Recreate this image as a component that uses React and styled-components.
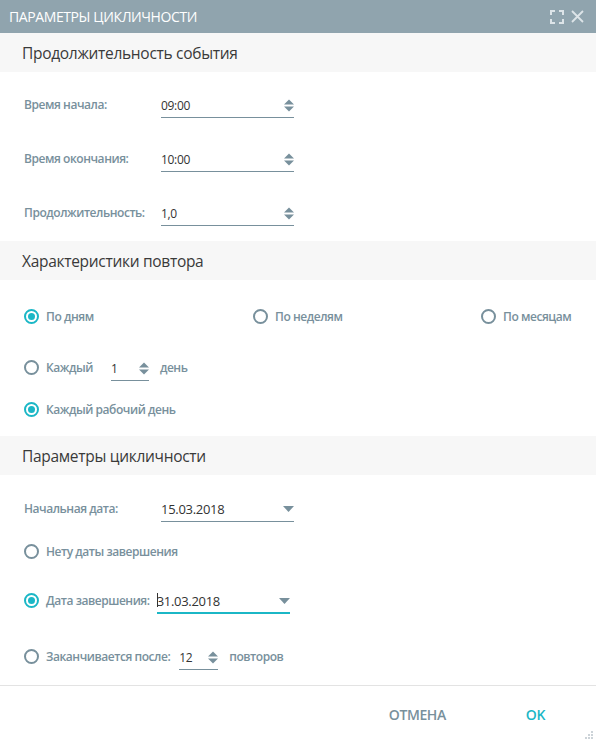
import React from 'react';
import styled, { createGlobalStyle } from 'styled-components';

const GlobalStyle = createGlobalStyle`
  html, body {
    margin: 0;
    padding: 0;
    background: #fff;
  }
  * { box-sizing: border-box; }
`;

const TEAL = '#1bb7c6';
const GRAY = '#78909c';

const Dialog = styled.div`
  width: 596px;
  height: 742px;
  background: #fff;
  display: flex;
  flex-direction: column;
  font-family: "Open Sans", "Noto Sans", sans-serif;
  position: relative;
  overflow: hidden;
`;

const Header = styled.div`
  height: 33px;
  background: #90a4ae;
  display: flex;
  align-items: center;
  justify-content: space-between;
  padding: 0 12px 0 9px;
  color: #fff;
`;

const Title = styled.div`
  font-size: 14px;
  letter-spacing: -0.4px;
  text-transform: uppercase;
`;

const HeaderTools = styled.div`
  display: flex;
  align-items: center;
  gap: 7px;
`;

const Band = styled.div`
  height: 39px;
  background: #f7f7f7;
  display: flex;
  align-items: center;
  padding-left: 22px;
  font-size: 15.5px;
  color: #3a3a3a;
  letter-spacing: -0.3px;
`;

const Body = styled.div`
  padding: ${({ pad }) => pad};
  display: flex;
  flex-direction: column;
`;

const Row = styled.div`
  height: ${({ h }) => h}px;
  display: flex;
  align-items: center;
  padding-left: 24px;
  padding-right: 24px;
`;

const RadioGrid = styled.div`
  height: ${({ h }) => h}px;
  display: grid;
  grid-template-columns: 229px 228px auto;
  align-items: center;
  padding-left: 24px;
`;

const Label = styled.span`
  width: ${({ w }) => (w ? `${w}px` : 'auto')};
  font-size: 12px;
  font-weight: 600;
  color: ${GRAY};
  letter-spacing: -0.45px;
  white-space: nowrap;
  margin-left: ${({ ml }) => ml || 0}px;
`;

const Field = styled.div`
  width: ${({ w }) => w}px;
  height: 24px;
  display: flex;
  align-items: center;
  justify-content: space-between;
  border-bottom: ${({ focused }) => (focused ? `2px solid ${TEAL}` : `1px solid ${GRAY}`)};
  margin-top: 4px;
  margin-left: ${({ ml }) => ml || 0}px;
  padding-bottom: ${({ focused }) => (focused ? 0 : 1)}px;
`;

const Value = styled.span`
  font-size: ${({ big }) => (big ? 13 : 12)}px;
  color: #333;
  letter-spacing: -0.3px;
  position: relative;
`;

const Caret = styled.span`
  position: absolute;
  left: 0;
  top: 1px;
  width: 1px;
  height: 14px;
  background: #333;
`;

const RadioWrap = styled.label`
  display: flex;
  align-items: center;
  gap: 7px;
`;

const Circle = styled.span`
  width: 15px;
  height: 15px;
  border-radius: 50%;
  border: 2px solid ${({ on }) => (on ? TEAL : GRAY)};
  display: flex;
  align-items: center;
  justify-content: center;
  flex-shrink: 0;
  &::after {
    content: '';
    width: 7px;
    height: 7px;
    border-radius: 50%;
    background: ${({ on }) => (on ? TEAL : 'transparent')};
  }
`;

const Footer = styled.div`
  margin-top: auto;
  height: 57px;
  border-top: 1px solid #e3e3e3;
  display: flex;
  align-items: center;
  justify-content: flex-end;
  padding-right: 51px;
  gap: 80px;
`;

const Button = styled.button`
  border: none;
  background: none;
  padding: 0;
  font-family: inherit;
  font-size: 14px;
  font-weight: 600;
  letter-spacing: -0.4px;
  color: ${({ primary }) => (primary ? TEAL : GRAY)};
  text-transform: uppercase;
  cursor: pointer;
`;

const Grip = styled.svg`
  position: absolute;
  right: 2px;
  bottom: 2px;
`;

const Spinner = () => (
  <svg width="10" height="13" viewBox="0 0 10 13">
    <path d="M0 5.5 L5 0.5 L10 5.5 Z" fill={GRAY} />
    <path d="M0 7.5 L5 12.5 L10 7.5 Z" fill={GRAY} />
  </svg>
);

const Caret8 = () => (
  <svg width="11" height="6" viewBox="0 0 11 6">
    <path d="M0 0 L11 0 L5.5 6 Z" fill={GRAY} />
  </svg>
);

const Radio = ({ on, children }) => (
  <RadioWrap>
    <Circle on={on ? 1 : 0} />
    {children}
  </RadioWrap>
);

const TimeRow = ({ label, value, h }) => (
  <Row h={h}>
    <Label w={137}>{label}</Label>
    <Field w={133}>
      <Value>{value}</Value>
      <Spinner />
    </Field>
  </Row>
);

const App = () => {
  return (
    <Dialog>
      <GlobalStyle />
      <Header>
        <Title>Параметры цикличности</Title>
        <HeaderTools>
          <svg width="14" height="14" viewBox="0 0 14 14" fill="none" stroke="#dde4e8" strokeWidth="2">
            <path d="M1 5 V1 H5 M9 1 H13 V5 M13 9 V13 H9 M5 13 H1 V9" />
          </svg>
          <svg width="13" height="13" viewBox="0 0 13 13" stroke="#dde4e8" strokeWidth="1.8">
            <path d="M1 1 L12 12 M12 1 L1 12" />
          </svg>
        </HeaderTools>
      </Header>

      <Band>Продолжительность события</Band>
      <Body pad="5px 0 2px">
        <TimeRow label="Время начала:" value="09:00" h={54} />
        <TimeRow label="Время окончания:" value="10:00" h={54} />
        <TimeRow label="Продолжительность:" value="1,0" h={54} />
      </Body>

      <Band>Характеристики повтора</Band>
      <Body pad="11px 0 11px">
        <RadioGrid h={50}>
          <Radio on>
            <Label>По дням</Label>
          </Radio>
          <Radio>
            <Label>По неделям</Label>
          </Radio>
          <Radio>
            <Label>По месяцам</Label>
          </Radio>
        </RadioGrid>
        <Row h={52}>
          <Radio>
            <Label>Каждый</Label>
          </Radio>
          <Field w={38} ml={18}>
            <Value>1</Value>
            <Spinner />
          </Field>
          <Label ml={11}>день</Label>
        </Row>
        <Row h={32}>
          <Radio on>
            <Label>Каждый рабочий день</Label>
          </Radio>
        </Row>
      </Body>

      <Band>Параметры цикличности</Band>
      <Body pad="12px 0 0">
        <Row h={42}>
          <Label w={137}>Начальная дата:</Label>
          <Field w={133}>
            <Value big>15.03.2018</Value>
            <Caret8 />
          </Field>
        </Row>
        <Row h={44}>
          <Radio>
            <Label>Нету даты завершения</Label>
          </Radio>
        </Row>
        <Row h={54}>
          <Radio on>
            <Label>Дата завершения:</Label>
          </Radio>
          <Field w={133} ml={7} focused>
            <Value big>
              <Caret />
              31.03.2018
            </Value>
            <Caret8 />
          </Field>
        </Row>
        <Row h={58}>
          <Radio>
            <Label>Заканчивается после:</Label>
          </Radio>
          <Field w={39} ml={9}>
            <Value>12</Value>
            <Spinner />
          </Field>
          <Label ml={11}>повторов</Label>
        </Row>
      </Body>

      <Footer>
        <Button>Отмена</Button>
        <Button primary>OK</Button>
      </Footer>
      <Grip width="10" height="10" viewBox="0 0 10 10">
        <rect x="7" y="1" width="2" height="2" fill="#ccd3d8" />
        <rect x="4" y="4" width="2" height="2" fill="#ccd3d8" />
        <rect x="7" y="4" width="2" height="2" fill="#ccd3d8" />
        <rect x="1" y="7" width="2" height="2" fill="#ccd3d8" />
        <rect x="4" y="7" width="2" height="2" fill="#ccd3d8" />
        <rect x="7" y="7" width="2" height="2" fill="#ccd3d8" />
      </Grip>
    </Dialog>
  );
};

export default App;
